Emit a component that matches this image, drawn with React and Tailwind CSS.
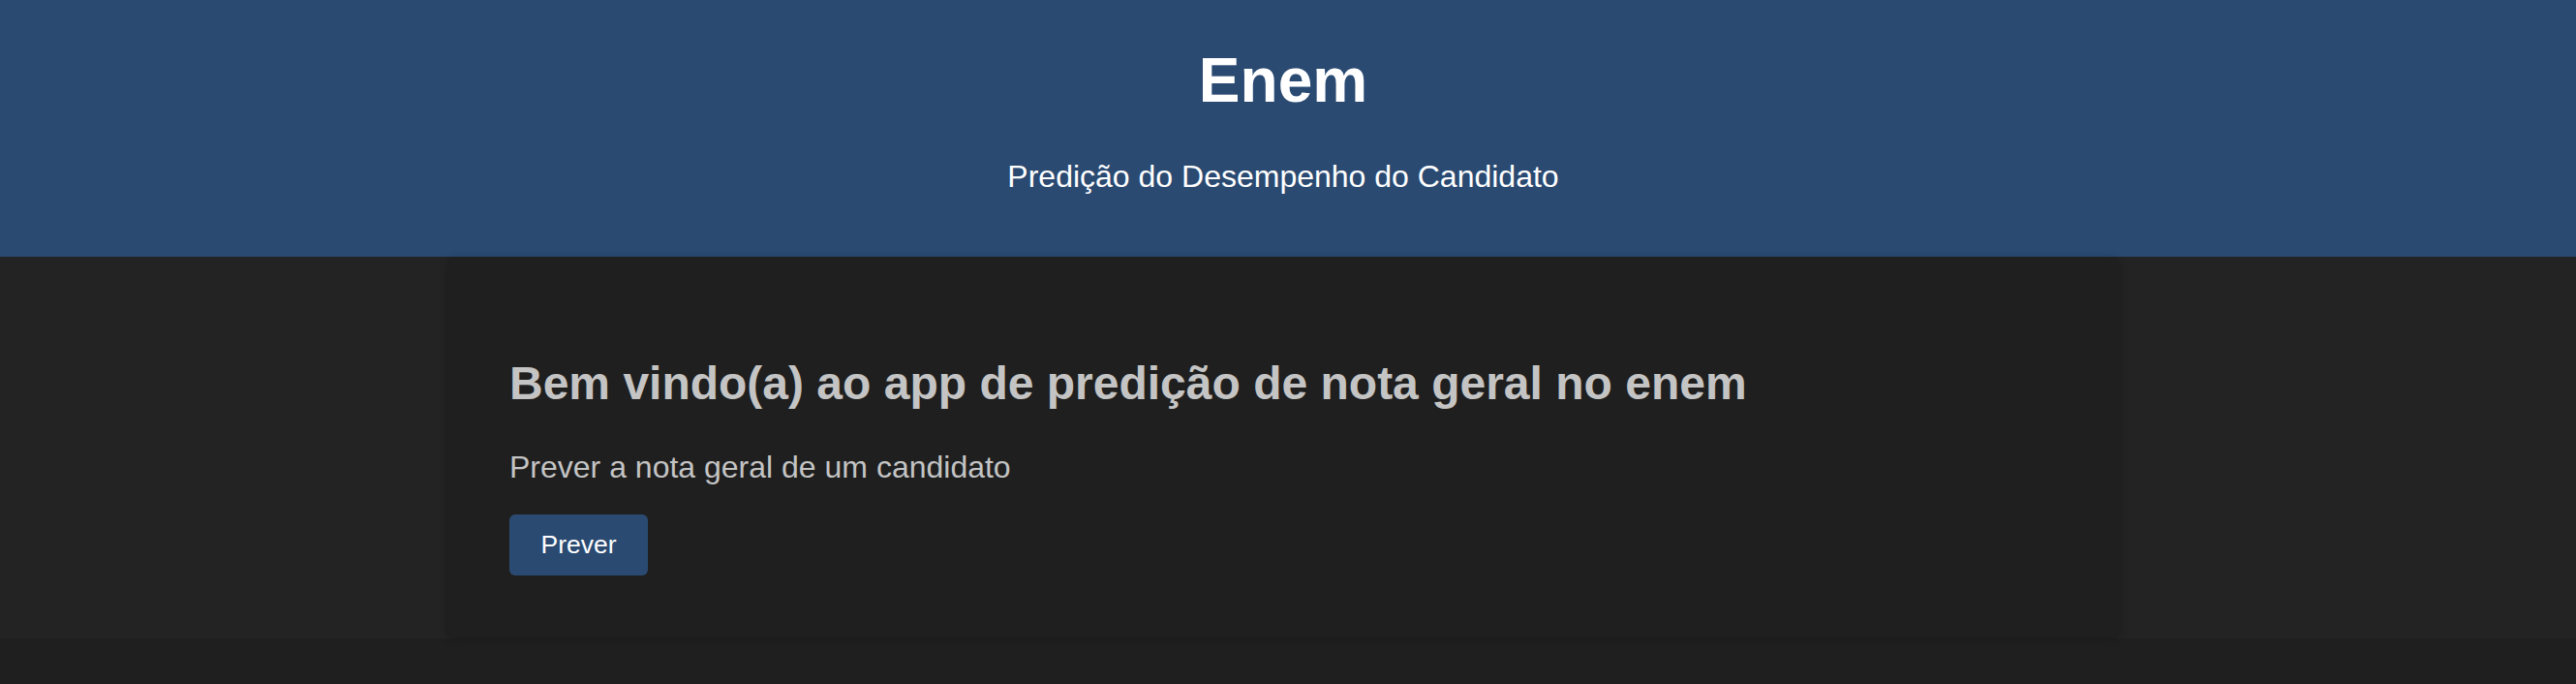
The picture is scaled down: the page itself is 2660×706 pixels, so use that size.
export default function App() {
  return (
    <div className="min-h-screen bg-[#1f1f1f] font-['Liberation_Sans',Arial,sans-serif]">
      {/* cabeçalho */}
      <header className="bg-[#2a4a72] pr-[10px] pt-[51px] pb-[67px] text-center text-white">
        <h1 className="text-[64px] font-bold leading-none">Enem</h1>
        <p className="mt-[51px] text-[32px] leading-none">Predição do Desempenho do Candidato</p>
      </header>

      {/* conteúdo */}
      <main className="bg-[#232323] pr-[10px] pb-[2px]">
        <section className="mx-auto w-[1726px] rounded-[8px] bg-[#1f1f1f] px-[64px] pt-[107px] pb-[63px] shadow-[0_2px_8px_rgba(0,0,0,0.25)]">
          <h2 className="text-[48px] font-bold leading-none text-[#c4c4c4]">
            Bem vindo(a) ao app de predição de nota geral no enem
          </h2>
          <p className="mt-[46px] text-[32px] leading-none text-[#c4c4c4]">
            Prever a nota geral de um candidato
          </p>
          <button className="mt-[33px] flex h-[63px] w-[143px] items-center justify-center rounded-[6px] bg-[#2a4a72] text-[26.5px] leading-none text-white">
            Prever
          </button>
        </section>
      </main>
    </div>
  );
}
